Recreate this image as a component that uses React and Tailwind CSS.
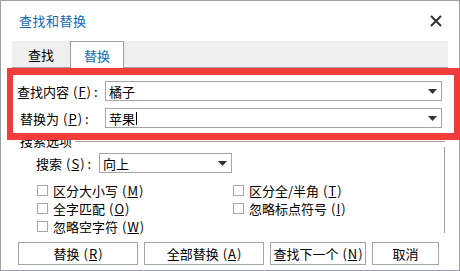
import React from 'react';

const Arrow = () => (
  <svg width="9" height="5" viewBox="0 0 9 5" className="shrink-0">
    <path d="M0 0H9L4.5 5Z" fill="#333" />
  </svg>
);

const Key = ({ k }) => (
  <span className="ml-[4px]">
    (<span className="underline underline-offset-1 mx-px">{k}</span>)
  </span>
);

const Check = ({ label, k }) => (
  <div className="flex items-center h-[18px]">
    <div className="w-[11px] h-[11px] border border-[#a8a8a8] bg-white shrink-0" />
    <span className="ml-[5px] leading-[13px] whitespace-nowrap">
      {label}
      <Key k={k} />
    </span>
  </div>
);

const Btn = ({ w, label, k }) => (
  <div
    className={`${w} h-[23px] border border-[#a5a5a5] bg-white flex items-center justify-center whitespace-nowrap leading-[13px]`}
  >
    {label}
    {k && <Key k={k} />}
  </div>
);

const App = () => {
  return (
    <div className="relative w-[460px] h-[271px] bg-white border border-[#9ca1a8] flex flex-col text-[13px] text-black font-['Noto_Sans_CJK_SC',sans-serif]">
      {/* title */}
      <div className="h-[40px] flex items-center justify-between pl-[18px] pr-[17px]">
        <span className="text-[13px] leading-[14px] text-[#0d6ab8] tracking-[0.5px]">查找和替换</span>
        <svg width="12" height="12" viewBox="0 0 12 12">
          <path d="M1 1L11 11M11 1L1 11" stroke="#333" strokeWidth="2" />
        </svg>
      </div>

      {/* tabs */}
      <div className="ml-[11px] mr-[11px] h-[27px] bg-[#efefef] border-b border-[#a0a0a0] flex">
        <div className="w-[58px] flex items-center justify-center leading-[13px]">查找</div>
        <div className="w-[54px] -mb-px bg-white border-x border-t border-[#a0a0a0] flex items-center justify-center leading-[13px] text-[#0d6ab8]">
          替换
        </div>
      </div>

      {/* highlighted rows */}
      <div className="relative z-10 ml-[6px] mr-[-1px] h-[72px] border-y-[7px] border-x-[6px] border-[#f23b3b] bg-white flex flex-col pt-[6px] gap-[7px]">
        <div className="flex items-center h-[20px]">
          <div className="w-[92px] pl-[4px] whitespace-nowrap leading-[13px]">
            查找内容<Key k="F" /><span className="ml-[3px]">:</span>
          </div>
          <div className="w-[337px] h-[20px] border border-[#a5a5a5] flex items-center justify-between pl-[3px] pr-[4px]">
            <span className="leading-[13px]">橘子</span>
            <Arrow />
          </div>
        </div>
        <div className="flex items-center h-[20px]">
          <div className="w-[92px] pl-[7px] whitespace-nowrap leading-[13px]">
            替换为<Key k="P" /><span className="ml-[3px]">:</span>
          </div>
          <div className="w-[337px] h-[20px] border border-[#a5a5a5] flex items-center justify-between pl-[3px] pr-[4px]">
            <span className="flex items-center leading-[13px]">
              苹果<span className="w-px h-[13px] bg-black ml-px" />
            </span>
            <Arrow />
          </div>
        </div>
      </div>

      {/* search options group */}
      <div className="-mt-[5px] ml-[19px] mr-[14px] flex flex-col">
        <div className="flex items-center h-[12px]">
          <span className="leading-[12px] whitespace-nowrap">搜索选项</span>
          <div className="flex-1 h-px bg-[#a0a0a0] ml-[3px]" />
        </div>
        <div className="border-r border-[#a0a0a0] h-[86px] flex flex-col">
          <div className="flex items-center mt-[6px] pl-[16px] h-[20px]">
            <div className="w-[63px] whitespace-nowrap leading-[13px]">
              搜索<Key k="S" /><span className="ml-[3px]">:</span>
            </div>
            <div className="w-[133px] h-[20px] border border-[#a5a5a5] flex items-center justify-between pl-[3px] pr-[4px]">
              <span className="leading-[13px]">向上</span>
              <Arrow />
            </div>
          </div>
          <div className="flex mt-[8px] pl-[17px]">
            <div className="w-[196px] flex flex-col">
              <Check label="区分大小写" k="M" />
              <Check label="全字匹配" k="O" />
              <Check label="忽略空字符" k="W" />
            </div>
            <div className="flex flex-col">
              <Check label="区分全/半角" k="T" />
              <Check label="忽略标点符号" k="I" />
            </div>
          </div>
        </div>
      </div>

      {/* buttons */}
      <div className="flex gap-[6px] ml-[17px] mt-[9px]">
        <Btn w="w-[120px]" label="替换" k="R" />
        <Btn w="w-[120px]" label="全部替换" k="A" />
        <Btn w="w-[96px]" label="查找下一个" k="N" />
        <Btn w="w-[67px]" label="取消" />
      </div>
    </div>
  );
};

export default App;
